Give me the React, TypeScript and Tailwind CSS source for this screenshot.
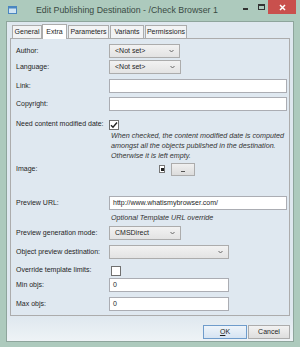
import { useState } from 'react';

const font = { fontFamily: '"Liberation Sans", Arial, sans-serif' };

function Dropdown({ value, width }: { value?: string; width: string }) {
  return (
    <div
      className={`${width} h-[14px] flex items-center justify-between border border-[#acacac] bg-gradient-to-b from-[#f2f2f2] to-[#e3e3e3] pl-[5px] pr-[5px] text-[7px] text-[#1e1e1e]`}
    >
      <span>{value}</span>
      <svg width="5" height="4" viewBox="0 0 5 4">
        <path d="M0.5 1 L2.5 3 L4.5 1" fill="none" stroke="#666" strokeWidth="1" />
      </svg>
    </div>
  );
}

function TextBox({ value, width }: { value?: string; width: string }) {
  return (
    <div className={`${width} h-[14px] flex items-center border border-[#abadb3] bg-white px-[3px] text-[7px] text-[#1e1e1e] whitespace-nowrap`}>
      {value}
    </div>
  );
}

function Check({ checked }: { checked?: boolean }) {
  return (
    <div className="w-[10px] h-[10px] border border-[#707070] bg-white flex items-center justify-center">
      {checked && (
        <svg width="8" height="8" viewBox="0 0 8 8">
          <path d="M1 4.2 L3 6.3 L7 1.5" fill="none" stroke="#222" strokeWidth="1.4" />
        </svg>
      )}
    </div>
  );
}

function Row({ label, className, children }: { label: string; className: string; children?: React.ReactNode }) {
  return (
    <div className={`flex items-center ${className}`}>
      <div className="w-[93px] shrink-0 whitespace-nowrap text-[7px] text-[#1e1e1e]">{label}</div>
      {children}
    </div>
  );
}

const tabWidths: Record<string, string> = {
  General: 'w-[30px]',
  Extra: 'w-[25px]',
  Parameters: 'w-[41px]',
  Variants: 'w-[34px]',
  Permissions: 'w-[42px]',
};

export default function App() {
  const [tab, setTab] = useState('Extra');
  const tabs = ['General', 'Extra', 'Parameters', 'Variants', 'Permissions'];

  return (
    <div style={font} className="w-[300px] h-[347px] bg-[#adcabd] flex flex-col overflow-hidden">
      {/* title bar */}
      <div className="h-[21px] flex items-start shrink-0 relative">
        <svg className="ml-[8px] mt-[6px]" width="9" height="8" viewBox="0 0 9 8">
          <rect x="0.5" y="0.5" width="8" height="7" fill="#cfe3f2" stroke="#4a86c0" />
          <rect x="0.5" y="0.5" width="8" height="2" fill="#4a86c0" />
        </svg>
        <div className="ml-[19px] mt-[4px] whitespace-nowrap text-[8.8px] text-[#3a4a44]">Edit Publishing Destination - /Check Browser 1</div>
        <div className="absolute left-[243px] top-[8px] w-[5px] h-[1.5px] bg-[#333]" />
        <div className="absolute left-[258px] top-[4px] w-[7px] h-[6px] border border-[#333] border-t-2" />
        <div className="absolute left-[268px] top-0 w-[28px] h-[14px] bg-[#c9504d] flex items-center justify-center">
          <svg width="7" height="7" viewBox="0 0 7 7">
            <path d="M1 1 L6 6 M6 1 L1 6" stroke="#fff" strokeWidth="1.5" />
          </svg>
        </div>
      </div>

      {/* client */}
      <div className="mx-[6px] mb-[5px] flex-1 flex flex-col border border-[#8ea59c] bg-[#dfe8ef]">
        <div className="flex items-end pl-[5px] pt-[1px] h-[16px]">
          {tabs.map((t) => (
            <button
              key={t}
              onClick={() => setTab(t)}
              className={
                t === tab
                  ? `${tabWidths[t]} h-[15px] -mb-px z-10 bg-white border border-b-0 border-[#acacac] text-[7px] text-[#1e1e1e]`
                  : `${tabWidths[t]} h-[13px] bg-[#f2f3f4] border border-b-0 border-[#acacac] text-[7px] text-[#1e1e1e] ml-px first:ml-0`
              }
            >
              {t}
            </button>
          ))}
        </div>

        <div className="mx-[3px] border border-[#acacac] bg-[#dfe8f0] pl-[5px] pb-[4px] flex flex-col">
          <Row label="Author:" className="mt-[5px] h-[14px]">
            <Dropdown value="<Not set>" width="w-[71px]" />
          </Row>
          <Row label="Language:" className="mt-[2px] h-[14px]">
            <Dropdown value="<Not set>" width="w-[72px]" />
          </Row>
          <Row label="Link:" className="mt-[5px] h-[14px]">
            <TextBox width="w-[178px]" />
          </Row>
          <Row label="Copyright:" className="mt-[4px] h-[14px]">
            <TextBox width="w-[178px]" />
          </Row>
          <Row label="Need content modified date:" className="mt-[7px] h-[13px]">
            <Check checked />
          </Row>
          <div className="ml-[95px] whitespace-nowrap text-[7.2px] leading-[10px] italic text-[#333]">
            When checked, the content modified date is computed
            <br />
            amongst all the objects published in the destination.
            <br />
            Otherwise it is left empty.
          </div>
          <Row label="Image:" className="mt-[1px] h-[14px]">
            <div className="ml-[50px] w-[6px] h-[8px] border border-[#777] bg-white flex items-center justify-center">
              <div className="w-[3px] h-[3px] bg-[#222]" />
            </div>
            <div className="ml-[6px] w-[24px] h-[13px] border border-[#acacac] bg-gradient-to-b from-[#f0f0f0] to-[#dcdcdc] flex items-end justify-center pb-[3px]">
              <div className="w-[4px] h-px bg-[#555]" />
            </div>
          </Row>
          <Row label="Preview URL:" className="mt-[20px] h-[14px]">
            <TextBox value="http://www.whatismybrowser.com/" width="w-[178px]" />
          </Row>
          <div className="ml-[95px] mt-[3px] h-[10px] whitespace-nowrap text-[7.2px] leading-[10px] italic text-[#333]">
            Optional Template URL override
          </div>
          <Row label="Preview generation mode:" className="mt-[3px] h-[14px]">
            <Dropdown value="CMSDirect" width="w-[72px]" />
          </Row>
          <Row label="Object preview destination:" className="mt-[5px] h-[14px]">
            <Dropdown width="w-[120px]" />
          </Row>
          <Row label="Override template limits:" className="mt-[6px] h-[11px]">
            <div className="ml-[2px]">
              <Check />
            </div>
          </Row>
          <Row label="Min objs:" className="mt-[2px] h-[14px]">
            <TextBox value="0" width="w-[120px]" />
          </Row>
          <Row label="Max objs:" className="mt-[5px] h-[14px]">
            <TextBox value="0" width="w-[120px]" />
          </Row>
        </div>

        <div className="flex-1 flex justify-end items-start pt-[9px] pr-[3px] bg-gradient-to-b from-[#dfe8ef] to-[#eef3f6]">
          <button className="w-[44px] h-[14px] border border-[#6f9ccb] bg-gradient-to-b from-[#eef4fa] to-[#d6e4f2] text-[7px] text-[#1e1e1e]">
            <span className="underline">O</span>K
          </button>
          <button className="ml-px w-[42px] h-[14px] border border-[#acacac] bg-gradient-to-b from-[#f2f2f2] to-[#dedede] text-[7px] text-[#1e1e1e]">
            Cancel
          </button>
        </div>
      </div>
    </div>
  );
}
